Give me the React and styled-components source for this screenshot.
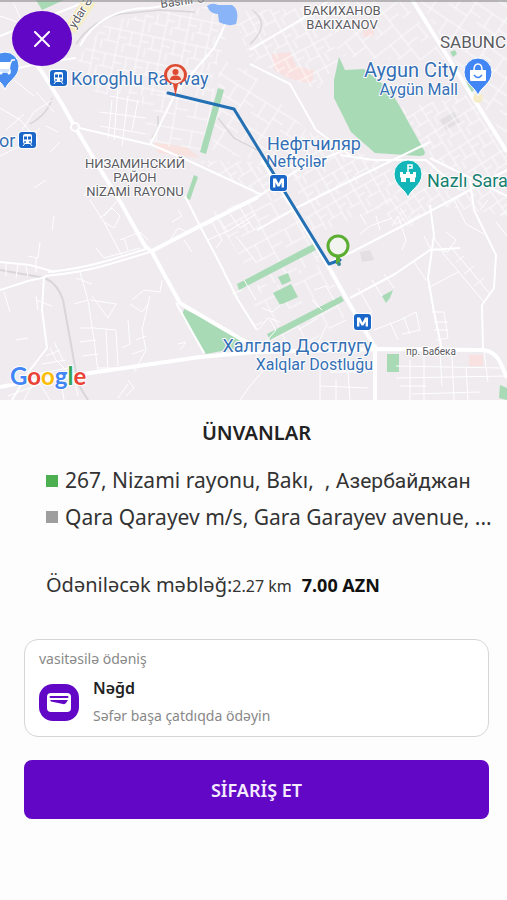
import styled, { createGlobalStyle } from 'styled-components';

// main roads, thick white
const mainRoads = [
  'M28 54 L42 72 L62 104 L75 127 L97 164 L121 203 L145 246 L152 252 L165 276 L180 303 L212 322 L248 343',
  'M0 387 L36 380 L90 373 L200 357 L257 352 L376 349 L484 350 Q496 352 501 364 L507 378',
  'M150 252 L200 226 L258 197',
  'M410 -4 L436 38 L472 96 L507 152',
  'M262 160 L292 206 L326 262 L350 305 L376 349',
  'M375 345 L375 400',
];

// secondary roads
const midRoads = [
  'M45 276 Q80 273 110 264 L150 252',
  'M48 272 Q80 269 110 260 L146 249',
  'M75 127 L152 145 L187 160 L262 195',
  'M0 36 L40 20 L100 -4',
  'M185 196 L200 226 L218 260 L238 300 L257 330',
  'M0 72 L46 62 L76 58',
  'M44 276 L42 310 L47 348 L30 370 L12 400',
  'M0 290 L28 281 L46 277',
  'M0 262 L30 265 L55 272',
  'M258 197 L300 168 L345 150',
  'M150 145 L176 92 L214 48 L232 10',
  'M430 158 L507 196',
  'M330 262 L352 252 L406 224 L440 206 L507 170',
  'M350 298 L395 274 L430 250 L460 248',
  'M483 350 L482 305 L494 288 L496 255 L474 210 L470 180',
  'M430 205 L434 235 L428 278 L434 312 L442 350',
  'M250 64 L290 84 L316 130 L350 155',
  'M340 155 L374 160 L426 160 L460 190',
  'M250 50 L300 20 L330 0',
  'M176 303 L204 353',
  'M257 230 L300 206 L352 180 L430 142',
  'M80 46 Q100 8 150 8 L200 0',
];

const smallRoads = [
  'M90 200 L104 222 L122 256 M118 200 L104 216 M100 218 L112 208 L120 216 L114 228 L104 222',
  'M96 248 L104 258 L140 248 M120 240 L140 232 L148 240 M128 250 L124 238',
  'M40 242 L38 258 L28 256 M36 258 L36 272 M6 262 L6 276 M18 264 L16 278 M26 266 L28 276',
  'M80 272 L88 300 L94 340 L98 372 M76 278 L92 284 M74 304 L88 300 M90 300 L116 304 L108 318 L92 296',
  'M80 328 L94 328 M80 342 L96 340 M82 356 L98 354 M94 328 L116 330 L118 366 M106 330 L108 370 M98 368 L130 368',
  'M150 296 L142 330 L146 350 L134 372 M132 300 L144 290 L160 292 L162 280 M130 304 L142 312 L148 304',
  'M128 320 L130 344 L122 348 M136 340 L146 336 M132 354 L144 350 M128 380 L134 388 L126 396 M118 398 L128 384',
  'M50 348 L56 360 L68 372 M46 356 L60 350 M42 364 L66 360 M36 374 L68 368 M54 342 L64 362 M24 400 L36 378 L50 400 M8 396 L40 384 M52 380 L74 378 L78 396 M60 374 L64 400',
  'M36 300 L52 306 M36 296 L38 310 M4 292 L10 312 M16 340 L28 338',
  'M54 216 L52 230 M46 180 L34 188 M90 186 L84 196 M60 142 L50 152 M46 126 L58 132',
  'M180 350 L186 342 L178 344 M170 240 L178 228 L188 232 M184 240 L192 252 M172 222 L182 216 L178 210',
  'M204 226 L212 222 L222 240 L216 248 M218 218 L228 232 M230 214 L240 228 L250 222 M240 208 L254 230 M208 240 L230 230 L256 214',
  'M236 236 L256 262 M232 294 L242 290 M244 280 L256 300',
  'M258 330 L268 318 L280 322 M264 344 L276 330 L270 320 M262 308 L272 312 L282 304',
  'M314 290 L326 286 L334 300 M322 310 L312 300 M298 330 L318 318 M330 328 L346 320 M318 344 L326 326',
  'M392 226 L398 216 L406 240 L402 250 M384 274 L394 288 M372 280 L382 296 M358 288 L372 312 L358 318 M414 262 L426 280',
  'M374 330 L400 320 L416 312 L420 330 L402 334 M390 322 L398 340 M404 318 L410 334 M432 312 L444 312 L448 338 L436 340 M434 322 L448 322 M434 330 L448 330',
  'M442 252 L484 302 M450 246 L490 294 M456 262 L464 256 M464 274 L474 266 M474 286 L484 278 M428 288 L458 272',
  'M424 236 L430 248 L448 252 L456 240 L446 232 M434 238 L444 252',
  'M454 200 L466 224 L484 234 M480 210 L488 200 M496 222 L507 236 M500 216 L507 210',
  'M396 366 L500 368 M396 378 L507 376 M400 386 L426 386 M410 360 L410 400 M424 356 L424 400 M440 352 L442 386 M452 356 L454 400 M466 368 L468 400 M484 352 L488 382 M412 394 L480 392',
  'M320 366 L320 400 M330 372 L368 372 M336 380 L336 400 M348 372 L350 400 M320 386 L368 388 M262 372 L250 386 L240 400 M256 352 L262 372',
  'M0 108 L20 120 L38 140 M6 130 L24 114 M14 80 L34 96 M22 130 L34 112 L52 100 M36 92 L54 112 M0 16 L40 30 M14 4 L22 22 M0 156 L20 146 L40 128',
  'M112 100 L108 138 M100 112 L146 118 M118 86 L114 140 M128 96 L122 146 M138 100 L132 130 M100 126 L146 134 M110 96 L140 102',
  'M360 234 L370 226 L392 218 M380 230 L376 216 M366 224 L360 214 M396 230 L420 214 M400 208 L412 226',
];

// each district is clipped to its polygon and filled with a rotated street grid
const districts = [
  { points: '76,60 108,20 212,6 226,40 206,96 96,94', angle: 12, fill: 'streetsA' },
  { points: '140,96 216,88 204,152 150,144', angle: 10, fill: 'streetsB' },
  { points: '232,12 326,6 338,60 318,90 250,60', angle: -28, fill: 'streetsA' },
  { points: '220,60 250,70 312,136 300,180 262,162 212,150', angle: 32, fill: 'streetsB' },
  { points: '196,160 262,162 290,206 256,196', angle: -32, fill: 'streetsA' },
  { points: '286,150 310,132 378,160 404,180 390,205 310,236', angle: -30, fill: 'streetsA' },
  { points: '396,110 468,94 507,156 507,190 430,158', angle: -32, fill: 'streetsA' },
  { points: '420,0 507,0 507,140 472,92', angle: 34, fill: 'streetsB' },
  { points: '330,0 404,0 446,60 400,60 338,56', angle: -38, fill: 'streetsB' },
  { points: '212,212 258,198 292,210 322,260 260,290', angle: -28, fill: 'streetsB' },
  { points: '380,204 430,166 507,194 507,216 440,206 400,232', angle: -34, fill: 'streetsA' },
  { points: '240,292 320,262 352,312 300,350 262,340', angle: -27, fill: 'streetsC' },
];

const parks = [
  'M36 0 L64 0 L42 10 Z',
  'M339 57 L345 70 L364 69 L390 90 L399 105 L425 152 Q425 156 420 156 L375 153 L351 132 L334 98 L334 80 Z',
  'M218 88 L224 90 L206 154 L200 152 Z',
  'M194 175 L198 177 L190 200 L186 198 Z',
  'M237 284 L313 244 L316 250 L239 290 Z',
  'M267 334 L341 296 L344 301 L270 340 Z',
  'M273 293 L291 284 L298 297 L280 305 Z',
  'M278 277 L288 273 L291 281 L282 285 Z',
  'M184 309 L242 337 L238 348 L206 354 L182 316 Z',
  'M387 354 L399 354 L399 372 L387 372 Z',
  'M450 52 L455 50 L457 54 L453 57 Z',
  'M466 80 L474 90 L470 94 Z',
  'M382 296 L393 290 L390 298 L386 303 Z',
  'M500 385 L507 388 L507 400 L499 398 Z',
];

const GlobalStyle = createGlobalStyle`
  body {
    margin: 0;
    background-color: #fdfdfd;
    color: #333333;
    font-family: 'Noto Sans', 'Open Sans', sans-serif;
  }

  *, *:before, *:after {
    box-sizing: border-box;
  }
`;

const MetroBadge = ({ x, y }) => (
  <g transform={`translate(${x} ${y})`}>
    <rect width="19" height="18" rx="4" fill="#fff" />
    <rect x="1" y="1" width="17" height="16" rx="3" fill="#1a67c9" />
    <path d="M4 13.500 V4.500 H7 L9.500 9.500 L12 4.500 H15 V13.500 H12.600 V8.500 L10.500 12.500 H8.500 L6.400 8.500 V13.500 Z" fill="#fff" />
  </g>
);

const TrainBadge = ({ x, y }) => (
  <g transform={`translate(${x} ${y})`}>
    <rect width="19" height="18" rx="4" fill="#fff" />
    <rect x="1" y="1" width="17" height="16" rx="3" fill="#1a67c9" />
    <rect x="5" y="3" width="9" height="10" rx="2" fill="#fff" />
    <path d="M6 5.500 H9 V8.500 H6 Z M10 5.500 H13 V8.500 H10 Z" fill="#1a67c9" />
    <circle cx="7" cy="11" r="0.900" fill="#1a67c9" />
    <circle cx="12" cy="11" r="0.900" fill="#1a67c9" />
    <path d="M6.500 13 L5 15 M12.500 13 L14 15" stroke="#fff" />
  </g>
);

const PlacePin = ({ x, y, color, children }) => (
  <g transform={`translate(${x} ${y})`}>
    <path
      d="M0 20 C-2 11 -14 8 -14 -4 A14 14 0 0 1 14 -4 C14 8 2 11 0 20 Z"
      fill={color}
      stroke="#fff"
    />
    {children}
  </g>
);

const CityMap = () => (
  <MapSvg viewBox="0 0 507 400" preserveAspectRatio="xMidYMid slice" role="img" aria-label="Bakı">
    <defs>
      <pattern id="streetsA" width="22" height="26" patternUnits="userSpaceOnUse">
        <StreetLines d="M0 4 H22 M0 17 H14 M4 4 V17 M14 0 V26 M20 17 V26 M14 11 H22" />
      </pattern>
      <pattern id="streetsB" width="34" height="30" patternUnits="userSpaceOnUse">
        <StreetLines d="M0 6 H34 M8 6 V22 M0 22 H22 M22 0 V30 M22 16 H34" />
      </pattern>
      <pattern id="streetsC" width="44" height="38" patternUnits="userSpaceOnUse">
        <StreetLines d="M0 8 H30 M12 8 V38 M30 0 V26 L44 26" />
      </pattern>
      {districts.map((d, i) => (
        <clipPath id={`district${i}`} key={d.points}>
          <polygon points={d.points} />
        </clipPath>
      ))}
    </defs>

    <rect width="507" height="400" fill="#efebef" />
    <path d="M272 54 L290 52 L296 66 L314 70 L312 84 L288 78 L274 70 Z" fill="#fae1e1" />
    <path d="M154 142 L186 147 L200 158 L158 153 Z" fill="#f8e3e1" />
    <path d="M363 30 L373 28 L374 36 L364 37 Z M469 355 L483 355 L483 366 L469 366 Z" fill="#fae1e1" />
    <path d="M440 120 L454 112 L460 122 L446 130 Z M360 252 L370 250 L374 260 L362 262 Z" fill="#e3e0e4" />

    {districts.map((d, i) => (
      <g clipPath={`url(#district${i})`} key={d.points}>
        <DistrictGrid transform={`rotate(${d.angle})`} fill={`url(#${d.fill})`} x="-400" y="-400" width="1200" height="1200" />
      </g>
    ))}

    {parks.map((d) => <path d={d} key={d} fill="#a9dab6" />)}
    <path d="M0 270 L45 278 Q58 284 63 300 L72 350 L78 384 L88 400" fill="none" stroke="#d9d6da" strokeWidth="2" />
    <path d="M52 98 Q48 114 30 124 M76 44 Q92 20 120 14 L160 10 L195 12 M158 116 L158 128 L152 138 M218 118 L234 138 L257 150 M252 10 Q272 24 250 44" fill="none" stroke="#d9d6da" strokeWidth="1.500" />

    <SmallRoads>{smallRoads.map((d) => <path d={d} key={d} />)}</SmallRoads>
    <MidRoads>{midRoads.map((d) => <path d={d} key={d} />)}</MidRoads>
    <MainRoads>{mainRoads.map((d) => <path d={d} key={d} />)}</MainRoads>
    <circle cx="75" cy="127" r="4" fill="#efebef" stroke="#fff" strokeWidth="2" />
    <path d="M207 6 Q212 2 218 5 L232 5 Q240 10 236 24 Q228 27 219 22 L218 14 Q210 14 207 6 Z" fill="#8ab4f8" />
    <path d="M70 30 L90 0" stroke="#f6edc4" strokeWidth="13" />
    <circle cx="478" cy="98" r="5" fill="#f5ecca" />

    <DistrictLabel fontSize="13" x="342" y="15" textAnchor="middle">БАКИХАНОВ</DistrictLabel>
    <DistrictLabel fontSize="13" x="342" y="29" textAnchor="middle">BAKIXANOV</DistrictLabel>
    <DistrictLabel fontSize="17" x="440" y="48">SABUNC</DistrictLabel>
    <DistrictLabel fontSize="13" x="135" y="168" textAnchor="middle">НИЗАМИНСКИЙ</DistrictLabel>
    <DistrictLabel fontSize="13" x="135" y="182" textAnchor="middle">РАЙОН</DistrictLabel>
    <DistrictLabel fontSize="13" x="135" y="196" textAnchor="middle">NİZAMİ RAYONU</DistrictLabel>
    <DistrictLabel fontSize="10" x="406" y="355">пр. Бабека</DistrictLabel>
    <DistrictLabel fontSize="12" transform="translate(75 29) rotate(-58)">ydar Əliyev</DistrictLabel>
    <DistrictLabel fontSize="12" transform="translate(161 8) rotate(-8)">Bashir S</DistrictLabel>

    <TransitLabel fontSize="18" x="71" y="85">Koroghlu Railway</TransitLabel>
    <TransitLabel fontSize="18" x="-1" y="147">or</TransitLabel>
    <TransitLabel fontSize="20" x="458" y="77" textAnchor="end">Aygun City</TransitLabel>
    <TransitLabel fontSize="16" x="458" y="95" textAnchor="end">Aygün Mall</TransitLabel>
    <TransitLabel fontSize="18" x="267" y="150">Нефтчиляр</TransitLabel>
    <TransitLabel fontSize="16" x="266" y="167">Neftçilər</TransitLabel>
    <TransitLabel fontSize="18" x="372" y="352" textAnchor="end">Халглар Достлугу</TransitLabel>
    <TransitLabel fontSize="16" x="373" y="370" textAnchor="end">Xalqlar Dostluğu</TransitLabel>
    <PlaceLabel fontSize="18" x="427" y="187">Nazlı Saray</PlaceLabel>

    <path d="M168 93 L234 109 L329 264 L340 260" fill="none" stroke="#2470b4" strokeWidth="3" strokeLinejoin="round" strokeLinecap="round" />

    <TrainBadge x={49} y={69} />
    <TrainBadge x={18} y={131} />
    <MetroBadge x={269} y={174} />
    <MetroBadge x={353} y={313} />

    <PlacePin x={5} y={70} color="#4a8df0">
      <path d="M-6 -6 H5 L7 -10 H10 M-5 0 H5 V2 H-5" fill="none" stroke="#fff" strokeWidth="1.500" />
      <path d="M-8 -8 H6 L5 -1 H-6 Z" fill="#fff" />
      <circle cx="-4" cy="3" r="1.500" fill="#fff" />
      <circle cx="4" cy="3" r="1.500" fill="#fff" />
    </PlacePin>
    <PlacePin x={478} y={76} color="#4285f4">
      <path d="M-8 -6 H8 V4 Q8 5 7 5 H-7 Q-8 5 -8 4 Z" fill="#fff" />
      <path d="M-4 -6 Q-4 -12 0 -12 Q4 -12 4 -6" fill="none" stroke="#fff" strokeWidth="1.500" />
      <path d="M-4 -1 Q0 4 4 -1" fill="none" stroke="#4285f4" strokeWidth="1.500" />
    </PlacePin>
    <PlacePin x={408} y={178} color="#12b5b8">
      <path d="M-8 -6 H-5 V-4 H-2 V-6 H2 V-4 H5 V-6 H8 V-1 L7 0 V4 H2 V0 H-2 V4 H-7 V0 L-8 -1 Z" fill="#fff" />
      <path d="M0 -5 V-13 H4 V-10 H0" fill="none" stroke="#fff" strokeWidth="1.500" />
    </PlacePin>

    {/* pickup */}
    <path d="M175.500 96 L173 84 Q164 82 164 75 A11.500 11 0 0 1 187 75 Q187 82 178 84 Z" fill="#dd4b33" />
    <circle cx="175.500" cy="75" r="8.500" fill="#f8e5df" />
    <circle cx="175.500" cy="72" r="3" fill="#dd4b33" />
    <path d="M170 80 Q170 75.500 175.500 75.500 Q181 75.500 181 80 Z" fill="#dd4b33" />

    {/* destination */}
    <path d="M338 264 L338 255" stroke="#5cae32" strokeWidth="4" />
    <circle cx="338" cy="246" r="10" fill="#f1f4ef" stroke="#5cae32" strokeWidth="3" />
    <circle cx="339" cy="264" r="2" fill="#3c8790" />

    <GoogleText x="10" y="385">
      <tspan fill="#4285f4">G</tspan>
      <tspan fill="#ea4335">o</tspan>
      <tspan fill="#fbbc05">o</tspan>
      <tspan fill="#4285f4">g</tspan>
      <tspan fill="#34a853">l</tspan>
      <tspan fill="#ea4335">e</tspan>
    </GoogleText>
    <rect width="507" height="2" fill="#8f8d90" opacity="0.600" />
  </MapSvg>
);

const App = () => (
  <>
    <GlobalStyle />
    <Page>
      <MapArea>
        <CityMap />
        <CloseButton type="button" aria-label="Bağla">
          <svg width="18" height="16" viewBox="0 0 18 16" aria-hidden="true">
            <path d="M2 1 L16 15 M16 1 L2 15" stroke="#fff" strokeWidth="2" strokeLinecap="round" />
          </svg>
        </CloseButton>
      </MapArea>

      <Details>
        <Title>ÜNVANLAR</Title>
        <AddressList>
          <Address>
            <Marker $color="#4caf50" />
            <AddressText>267, Nizami rayonu, Bakı,  , <Cyrillic>Азербайджан</Cyrillic></AddressText>
          </Address>
          <Address>
            <Marker $color="#9e9e9e" />
            <AddressText>Qara Qarayev m/s, Gara Garayev avenue, ...</AddressText>
          </Address>
        </AddressList>

        <PriceRow>
          <span>Ödəniləcək məbləğ:</span>
          <Distance>2.27 km</Distance>
          <Price>7.00 AZN</Price>
        </PriceRow>

        <PaymentCard type="button">
          <PaymentCaption>vasitəsilə ödəniş</PaymentCaption>
          <PaymentMethod>
            <WalletIcon>
              <svg width="24" height="19" viewBox="0 0 24 19" aria-hidden="true">
                <rect width="24" height="19" rx="4" fill="#fff" />
                <path d="M3.500 4 H20.500" stroke="#6207c6" strokeWidth="2" strokeLinecap="round" />
                <path d="M3 7 H21 L19 10 Q18 11.500 16 11 L4 8.500 Z" fill="#6207c6" />
              </svg>
            </WalletIcon>
            <PaymentText>
              <PaymentName>Nəğd</PaymentName>
              <PaymentHint>Səfər başa çatdıqda ödəyin</PaymentHint>
            </PaymentText>
          </PaymentMethod>
        </PaymentCard>

        <OrderButton type="button">SİFARİŞ ET</OrderButton>
      </Details>
    </Page>
  </>
);

const Page = styled.main`
  min-height: 100vh;
`;

const MapArea = styled.section`
  position: relative;
`;

const MapSvg = styled.svg`
  display: block;
  width: 100%;
  height: 400px;
`;

const StreetLines = styled.path`
  fill: none;
  stroke: #ffffff;
  stroke-width: 1px;
`;

const DistrictGrid = styled.rect`
  opacity: 0.8;
`;

const Roads = styled.g`
  fill: none;
  stroke: #ffffff;
  stroke-linejoin: round;
`;

const SmallRoads = styled(Roads)`
  stroke-width: 1px;
`;

const MidRoads = styled(Roads)`
  stroke-width: 2px;
`;

const MainRoads = styled(Roads)`
  stroke-width: 4px;
`;

const MapLabel = styled.text`
  font-family: Roboto, sans-serif;
  stroke: #ffffff;
  stroke-width: 2px;
  stroke-linejoin: round;
  paint-order: stroke;
`;

const DistrictLabel = styled(MapLabel)`
  fill: #5b5a5f;
`;

const TransitLabel = styled(MapLabel)`
  fill: #346fb5;
`;

const PlaceLabel = styled(MapLabel)`
  fill: #168070;
`;

const GoogleText = styled.text`
  font-family: Lato, sans-serif;
  font-size: 24px;
  font-weight: 700;
  stroke: #ffffff;
  stroke-width: 2px;
  paint-order: stroke;
`;

const CloseButton = styled.button`
  position: absolute;
  top: 11px;
  left: 12px;
  display: flex;
  align-items: center;
  justify-content: center;
  width: 60px;
  height: 55px;
  padding: 0;
  border: none;
  border-radius: 50%;
  background-color: #6207c6;
  cursor: pointer;
`;

const Details = styled.section`
  padding: 18px 18px 24px 24px;
`;

const Title = styled.h1`
  margin: 0 0 18px;
  color: #222222;
  font-size: 20px;
  font-weight: 600;
  line-height: 30px;
  text-align: center;
`;

const AddressList = styled.ul`
  display: flex;
  flex-direction: column;
  gap: 8px;
  margin: 0 0 40px;
  padding: 0 0 0 22px;
  list-style: none;
`;

const Address = styled.li`
  display: flex;
  align-items: center;
  gap: 7px;
`;

const Marker = styled.span`
  flex: none;
  width: 12px;
  height: 12px;
  background-color: ${({ $color }) => $color};
`;

const AddressText = styled.span`
  font-size: 21px;
  line-height: 28px;
  white-space: pre;
`;

const Cyrillic = styled.span`
  font-family: Roboto, sans-serif;
`;

const PriceRow = styled.p`
  display: flex;
  align-items: baseline;
  margin: 0 0 39px;
  padding-left: 22px;
  font-size: 20px;
  line-height: 28px;
`;

const Distance = styled.span`
  font-size: 16px;
`;

const Price = styled.strong`
  margin-left: 10px;
  color: #111111;
  font-size: 18px;
  font-weight: 700;
`;

const PaymentCard = styled.button`
  display: block;
  width: 100%;
  margin-bottom: 23px;
  padding: 8px 14px 6px;
  border: 1px solid #d6d6d6;
  border-radius: 14px;
  background-color: #ffffff;
  font-family: inherit;
  text-align: left;
  cursor: pointer;
`;

const PaymentCaption = styled.span`
  display: block;
  margin-bottom: 4px;
  color: #888888;
  font-size: 14px;
  line-height: 22px;
`;

const PaymentMethod = styled.span`
  display: flex;
  align-items: center;
  gap: 14px;
`;

const WalletIcon = styled.span`
  display: flex;
  align-items: center;
  justify-content: center;
  width: 40px;
  height: 37px;
  border-radius: 14px;
  background-color: #6207c6;
`;

const PaymentText = styled.span`
  display: flex;
  flex-direction: column;
`;

const PaymentName = styled.span`
  color: #222222;
  font-size: 16px;
  font-weight: 600;
  line-height: 28px;
`;

const PaymentHint = styled.span`
  color: #888888;
  font-size: 14px;
  line-height: 28px;
`;

const OrderButton = styled.button`
  display: block;
  width: 100%;
  height: 59px;
  border: none;
  border-radius: 8px;
  background-color: #6207c6;
  color: #f5eaff;
  font-family: inherit;
  font-size: 18px;
  font-weight: 600;
  cursor: pointer;
`;

export default App;
